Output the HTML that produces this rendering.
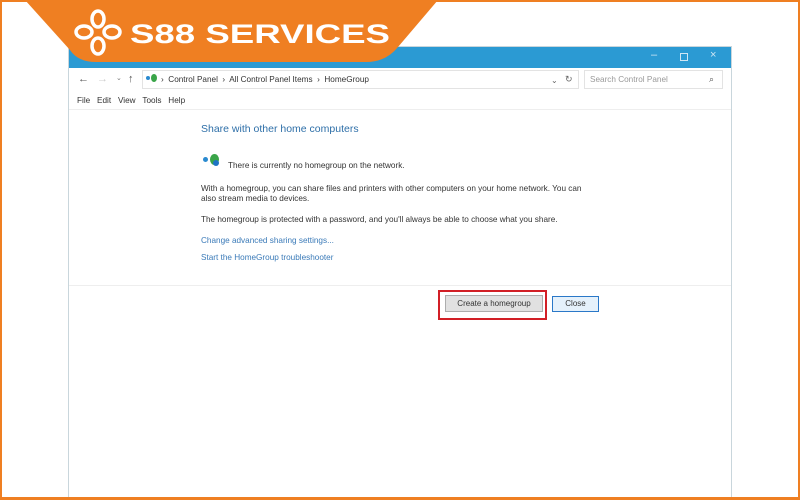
<!DOCTYPE html>
<html><head><meta charset="utf-8"><style>
*{margin:0;padding:0;box-sizing:border-box}
body{width:800px;height:500px;overflow:hidden;background:#fff;font-family:"Liberation Sans",sans-serif;position:relative}
.frame{position:absolute;inset:0;border:2px solid #ef7f22;border-bottom-width:3px;z-index:10;pointer-events:none}
.win{position:absolute;left:68px;top:46px;width:664px;height:452px;border:1px solid #c9d6dc;border-bottom:none;background:#fff}
.title{position:absolute;left:0;top:0;right:0;height:21px;background:#2b9ad3}
.t{position:absolute;font-size:8.2px;color:#333}
.a{position:absolute;font-size:8.2px;color:#3a7ab8}
.tab{position:absolute;left:18px;top:0;width:420px;height:62px;z-index:5}
</style></head><body>
<div class="frame"></div>
<div class="win">
 <div class="title">
  <span style="position:absolute;left:582px;top:2px;color:#cfe6f4;font-size:11px">–</span>
  <span style="position:absolute;left:611px;top:6px;width:8px;height:8px;border:1px solid #cfe6f4"></span>
  <span style="position:absolute;left:641px;top:2px;color:#cfe6f4;font-size:11px">×</span>
 </div>
 <span class="t" style="left:9px;top:26px;font-size:11px;color:#555">←</span>
 <span class="t" style="left:28px;top:26px;font-size:11px;color:#ccc">→</span>
 <span class="t" style="left:47px;top:27px;color:#777;font-size:7px">⌄</span>
 <span class="t" style="left:59px;top:26px;font-size:11px;color:#555">↑</span>
 <div style="position:absolute;left:73px;top:23px;width:437px;height:19px;border:1px solid #e3e3e3"></div>
 <span style="position:absolute;left:77px;top:29px;width:4px;height:4px;border-radius:50%;background:#2a8ad0"></span>
 <span style="position:absolute;left:82px;top:27px;width:6px;height:8px;border-radius:50%;background:#3aa549"></span>
 <span class="t" style="left:92px;top:28px">›&nbsp; Control Panel &nbsp;›&nbsp; All Control Panel Items &nbsp;›&nbsp; HomeGroup</span>
 <span class="t" style="left:482px;top:28px;color:#666">⌄</span>
 <span class="t" style="left:496px;top:27px;color:#666;font-size:9px">↻</span>
 <div style="position:absolute;left:515px;top:23px;width:139px;height:19px;border:1px solid #e3e3e3"></div>
 <span class="t" style="left:521px;top:28px;color:#999">Search Control Panel</span>
 <span class="t" style="left:640px;top:27px;color:#555;font-size:9px">⌕</span>
 <span class="t" style="left:8px;top:49px">File &nbsp;&nbsp;Edit &nbsp;&nbsp;View &nbsp;&nbsp;Tools &nbsp;&nbsp;Help</span>
 <div style="position:absolute;left:0;right:0;top:62px;height:1px;background:#eee"></div>
 <span class="t" style="left:132px;top:76px;font-size:10.5px;color:#2e6fa8">Share with other home computers</span>
 <span style="position:absolute;left:134px;top:110px;width:5px;height:5px;border-radius:50%;background:#2a8ad0"></span>
 <span style="position:absolute;left:141px;top:107px;width:9px;height:11px;border-radius:50%;background:#3aa549"></span>
 <span style="position:absolute;left:144px;top:113px;width:6px;height:6px;border-radius:50%;background:#1e74c4"></span>
 <span class="t" style="left:159px;top:114px">There is currently no homegroup on the network.</span>
 <span class="t" style="left:132px;top:137px;line-height:10px">With a homegroup, you can share files and printers with other computers on your home network. You can<br>also stream media to devices.</span>
 <span class="t" style="left:132px;top:168px">The homegroup is protected with a password, and you'll always be able to choose what you share.</span>
 <span class="a" style="left:132px;top:189px">Change advanced sharing settings...</span>
 <span class="a" style="left:132px;top:206px">Start the HomeGroup troubleshooter</span>
 <div style="position:absolute;left:0;right:0;top:238px;height:1px;background:#eee"></div>
 <div style="position:absolute;left:369px;top:243px;width:109px;height:30px;border:2px solid #d21f26"></div>
 <div style="position:absolute;left:376px;top:248px;width:98px;height:17px;background:#e1e1e1;border:1px solid #adadad;font-size:8px;color:#333;text-align:center;line-height:15px">Create a homegroup</div>
 <div style="position:absolute;left:483px;top:249px;width:47px;height:16px;background:#e5f1fb;border:1px solid #2a78c8;font-size:8px;color:#333;text-align:center;line-height:14px">Close</div>
</div>
<svg class="tab" viewBox="0 0 420 62"><path d="M7 0 H420 L380 47 Q368 62 348 62 H78 Q60 62 52 50 Z" fill="#ef7f22"/>
<g fill="none" stroke="#fff" stroke-width="3.5">
<ellipse cx="80" cy="19" rx="6" ry="8"/><ellipse cx="80" cy="46" rx="6" ry="8"/>
<ellipse cx="66" cy="32" rx="8" ry="6"/><ellipse cx="94" cy="32" rx="8" ry="6"/></g>
<text x="112" y="43" font-family="Liberation Sans" font-weight="bold" font-size="27" fill="#fff" textLength="260" lengthAdjust="spacingAndGlyphs">S88 SERVICES</text></svg>
</body></html>
